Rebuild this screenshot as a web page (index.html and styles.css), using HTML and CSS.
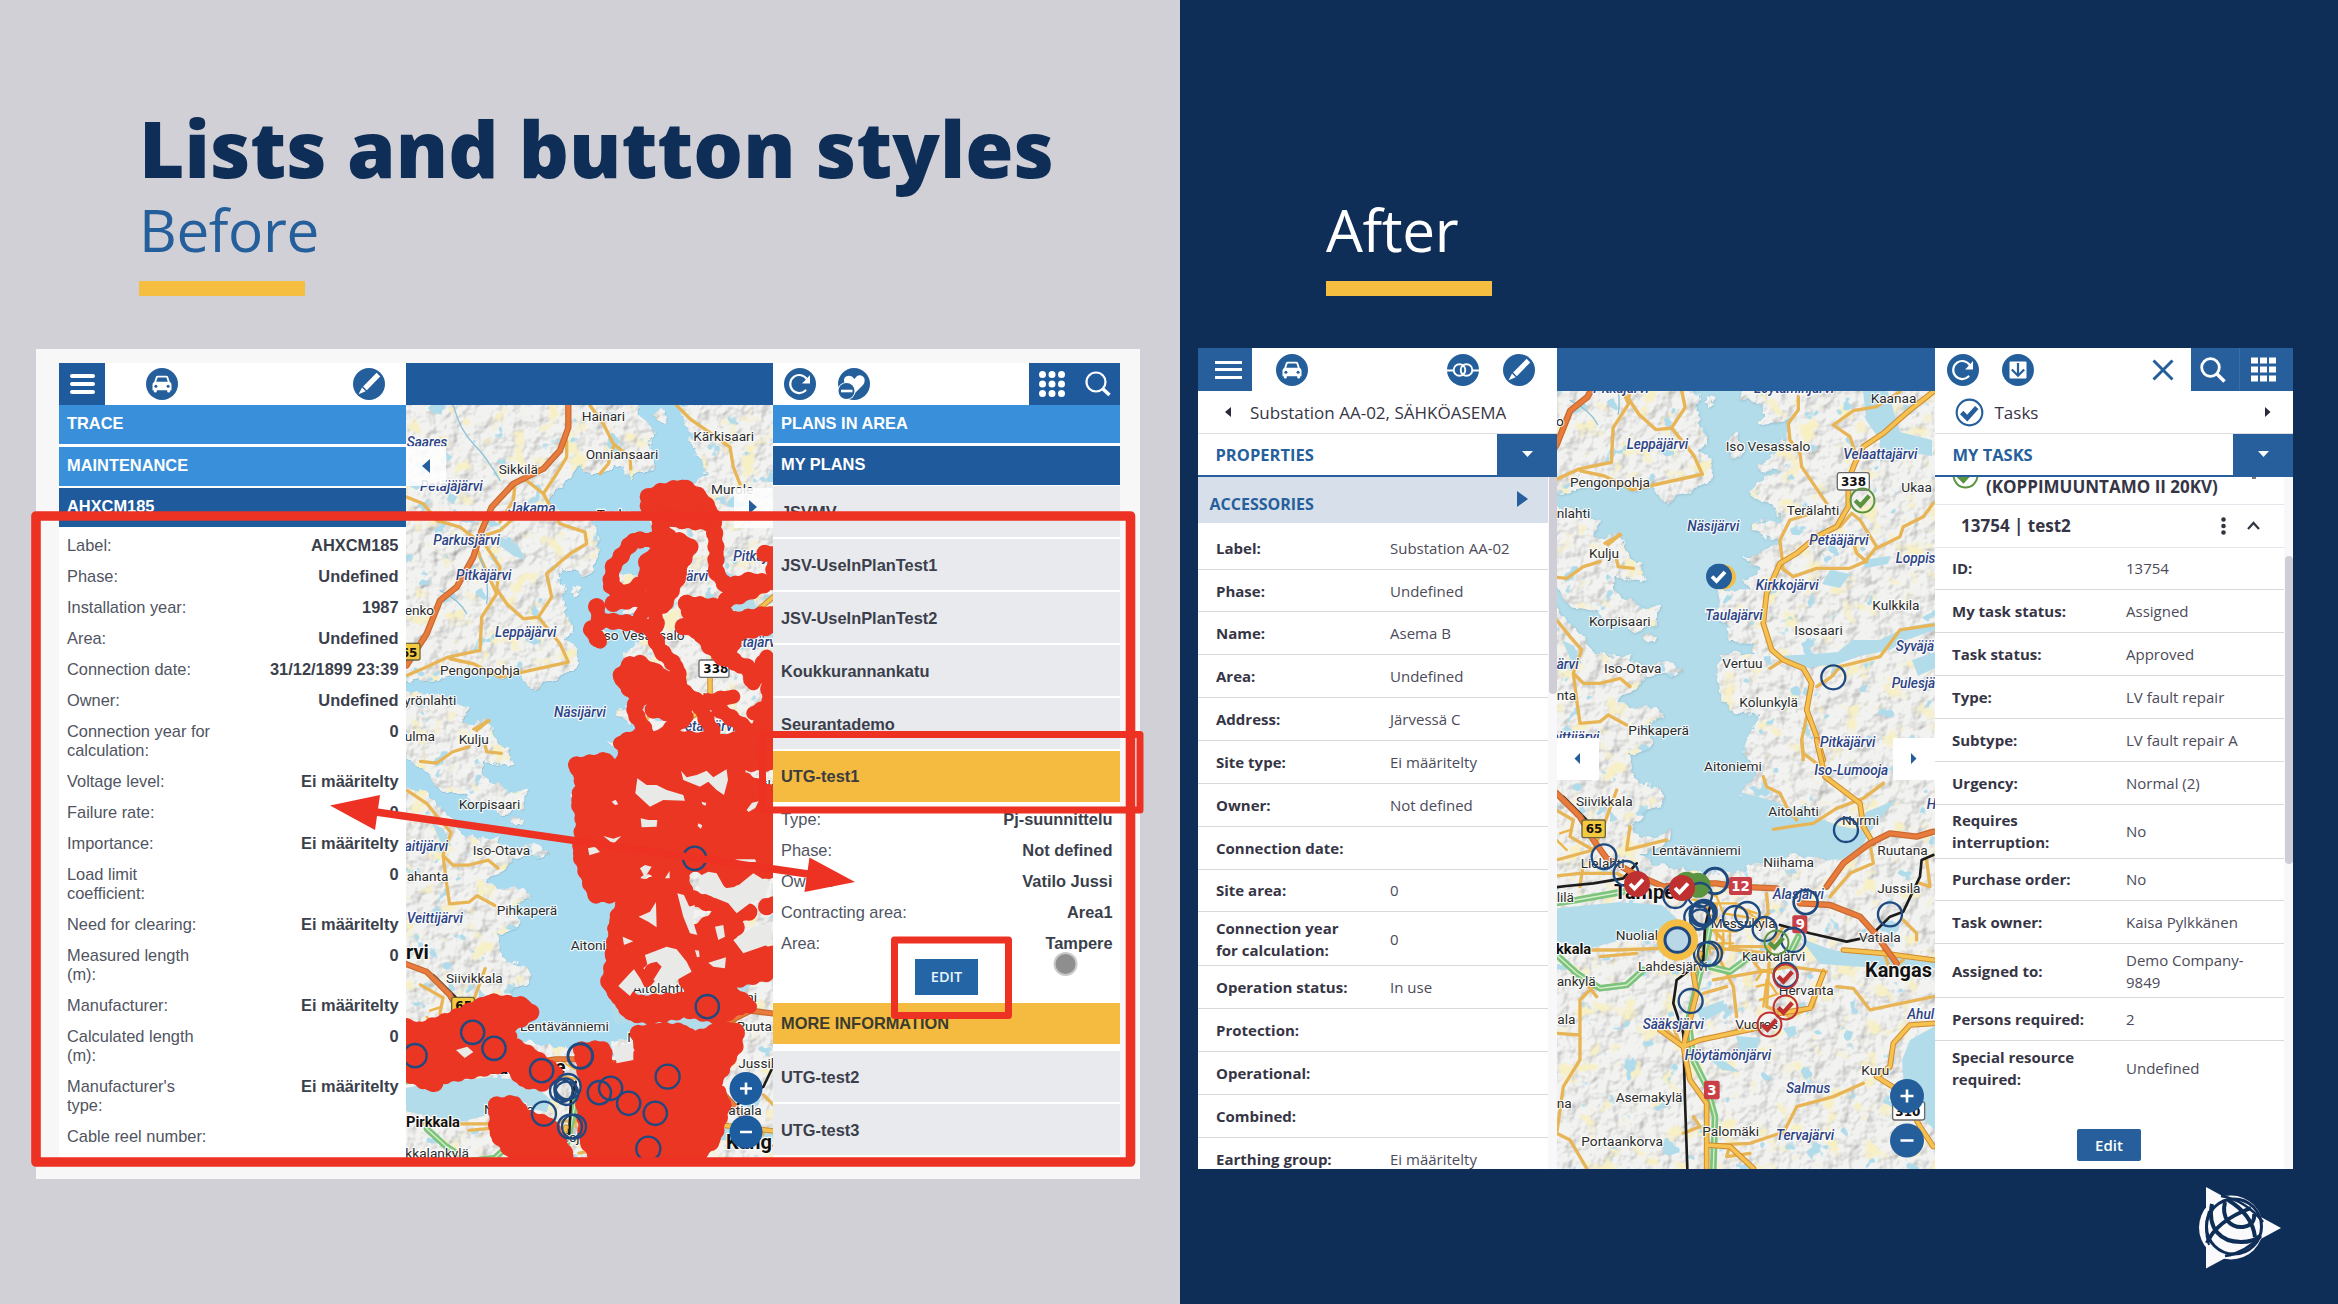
FILE: index.html
```html
<!DOCTYPE html>
<html lang="en">
<head>
<meta charset="utf-8">
<title>Lists and button styles</title>
<link rel="stylesheet" href="styles.css">
</head>
<body>
<svg class="defs" width="0" height="0" aria-hidden="true">
  <defs>
    <filter id="terrain" filterUnits="userSpaceOnUse" x="1525" y="200" width="420" height="980" color-interpolation-filters="sRGB">
      <feTurbulence type="fractalNoise" baseFrequency=".07" numOctaves="3" seed="4" result="coast"/>
      <feDisplacementMap in="SourceGraphic" in2="coast" scale="15" xChannelSelector="R" yChannelSelector="G" result="land"/>
      <feTurbulence type="fractalNoise" baseFrequency=".06" numOctaves="3" seed="9" result="n"/>
      <feDiffuseLighting in="n" surfaceScale="1.900" diffuseConstant="1.120" lighting-color="#fff" result="shade"><feDistantLight azimuth="225" elevation="62"/></feDiffuseLighting>
      <feBlend in="land" in2="shade" mode="multiply" result="hills"/>
      <feTurbulence type="fractalNoise" baseFrequency=".05" numOctaves="3" seed="21" result="n2"/>
      <feColorMatrix in="n2" values="0 0 0 0 .97  0 0 0 0 .94  0 0 0 0 .77  0 6 0 0 -3.5" result="fields"/>
      <feColorMatrix in="n2" values="0 0 0 0 .69  0 0 0 0 .86  0 0 0 0 .92  20 0 0 0 -13.8" result="ponds"/>
      <feMerge result="all"><feMergeNode in="hills"/><feMergeNode in="fields"/><feMergeNode in="ponds"/></feMerge>
      <feComposite in="all" in2="land" operator="in" result="cut"/>
      <feDropShadow in="cut" dx=".5" dy=".7" stdDeviation=".8" flood-color="#7fa9ba" flood-opacity=".6"/>
    </filter>

    <g id="land">
      <g filter="url(#terrain)" fill="#f2f2f1">
        <path d="M1525 205H1769L1785 229L1790 272L1766 284L1750 268L1735 284L1711 270L1702 287L1677 312L1704 324L1733 330L1735 363L1721 387L1694 377L1701 404L1697 420L1707 437L1702 450L1713 470L1707 483L1683 492L1670 503L1653 488L1627 490L1600 483L1577 490L1557 495L1525 497Z"/>
        <path d="M1525 505L1557 507L1580 517L1597 520L1593 537L1622 533L1628 553L1640 567L1647 580L1633 583L1617 573L1613 587L1633 603L1657 607L1657 627L1633 630L1607 617L1587 610L1570 603L1557 587L1525 565Z"/>
        <path d="M1525 605L1557 607L1570 623L1583 637L1593 650L1610 657L1633 653L1630 663L1663 660L1683 670L1677 677L1650 677L1627 690L1617 700L1630 707L1660 705L1663 717L1640 727L1650 740L1647 753L1630 750L1632 770L1640 783L1663 790L1663 807L1643 813L1633 827L1647 837L1670 830L1662 850L1640 853L1660 866L1700 871L1740 872L1765 862L1795 856L1830 858L1845 845L1850 838L1805 840L1775 832L1757 820L1748 812L1763 804L1740 796L1757 770L1745 757L1750 733L1760 715L1735 712L1722 700L1716 673L1720 655L1757 655L1752 646L1730 643L1727 624L1702 613L1722 603L1716 586L1748 592L1742 577L1762 570L1742 556L1757 556L1778 542L1752 532L1752 522L1782 520L1773 506L1750 496L1755 482L1782 472L1762 462L1782 450L1790 420L1760 425L1760 405L1740 400L1745 380L1775 385L1800 380L1790 350L1785 310L1812 320L1830 290L1845 280L1830 250L1815 210L1945 205V1180H1525Z"/>
        <path d="M1706 396l10 4-3 6-9-3zM1728 436l10-2 5 16-3 8-9-2zM1643 634l14 1-2 8-12-1zM1720 230l8 4-3 6zM1797 210l10 14-4 8-12-12zM1757 464l14-2 4 8-12 2zM1709 395h6z"/>
      </g>
      <g fill="#b2dcea">
        <path d="M1525 915L1560 908L1620 902L1662 905L1684 925L1680 938L1655 932L1630 938L1606 944L1584 950L1570 944L1525 935Z"/>
        <path d="M1776 656L1815 654L1838 652L1852 640L1880 640L1904 628L1935 622L1935 630L1906 640L1890 650L1860 656L1838 664L1800 668Z"/>
        <path d="M1740 792L1770 800L1840 826L1862 830L1866 812L1896 800L1884 814L1870 832L1860 850L1840 860L1810 856L1790 848L1750 846Z"/>
        <path d="M1862 380L1888 392L1900 432L1932 440L1932 456L1906 452L1880 462L1880 440L1866 420ZM1912 660L1935 652V668L1918 676ZM1830 570L1850 574L1840 588L1822 584ZM1862 560L1890 556L1888 564L1866 568Z"/>
        <path d="M1935 1026L1910 1040L1902 1060L1904 1085L1920 1094L1924 1120L1935 1130ZM1800 938L1832 950L1860 954L1900 958L1935 958L1935 968L1880 968L1820 964ZM1696 1010L1724 1000L1722 1012L1702 1022ZM1736 1036L1760 1038L1756 1052L1742 1060ZM1706 1056L1726 1062L1740 1072L1722 1070ZM1806 1152L1818 1142L1812 1160ZM1783 1028l12-2 2 8-8 4z"/>
        <path d="M1538 285l14 8-6 4-10-6zM1580 300l8 4-4 8-7-5zM1632 345l18 8 8 16-12-4-16-12zM1576 258l7 5-5 5zM1602 370l10 14-8-2zM1562 640l12 6 8 18-12-6zM1580 800l6 12-8 4zM1610 810l8 10-8 2z"/>
      </g>
      <g class="roads">
        <g transform="translate(1529 143) scale(.3433)">
          <path class="rd" d="M570 195L610 250L640 310L690 350L692 385M640 320L625 370L600 400M830 195L870 235L920 270L990 320L1000 380L1020 430M500 300L500 350L470 400L430 460L380 420M430 460L480 550L555 575L560 610L510 640L440 700L455 770L415 830L370 835L320 790L290 745L300 680L240 590L300 570L345 530M345 430L340 480L300 545M20 470L70 490L110 540L180 560L220 590L240 650L290 760L245 830L240 930L145 950L80 980L20 1005M150 955L220 970L300 1010L505 965L480 910L415 830M230 1170L265 1140"/>
          <path class="stream" d="M160 195Q180 270 220 310T300 420M240 650Q270 720 260 790M120 750Q180 780 200 820"/>
          <path class="mainC" d="M505 190V262L480 330L430 385L340 430L275 500L245 570L220 650L170 740L120 780L80 880L20 975"/>
          <path class="main" d="M505 190V262L480 330L430 385L340 430L275 500L245 570L220 650L170 740L120 780L80 880L20 975"/>
        </g>
        <g transform="translate(1550 340) scale(.3333)">
          <path class="rd" d="M0 710L50 715L100 680L150 665M165 610L212 585M200 660L205 680L250 685M-40 800L20 840L60 890L95 930L70 1000L100 1030L150 1030L210 1015L240 1040M70 1000L80 1080L90 1150L150 1145L175 1125L230 1155M745 170L745 210L715 250L720 300L750 340L755 380L830 490M1050 155L980 200L910 212L850 255L900 290L920 350M700 690L690 600L720 540L770 525M870 560L905 520L930 540L980 620L945 665L900 685L800 685L730 710L690 680M905 590L920 640L950 665M980 625L1050 590L1060 560L1120 530L1150 490M800 1040L845 1010L870 980L990 950L1050 870L1150 855M660 985L700 960M770 1130L755 1200L760 1260"/>
          <path class="hwC" d="M1150 155L1080 210L1000 280L940 320L915 370L895 420L895 500L860 560L800 590L740 640L690 670L650 760L640 850L665 930L700 960L760 985L785 1030L770 1110L800 1190L820 1260"/>
          <path class="hw" d="M1150 155L1080 210L1000 280L940 320L915 370L895 420L895 500L860 560L800 590L740 640L690 670L650 760L640 850L665 930L700 960L760 985L785 1030L770 1110L800 1190L820 1260"/>
        </g>
        <g transform="translate(1550 740) scale(.3333)">
          <path class="rd" d="M755 0L760 40L800 70M640 110L650 140L690 160L710 200L740 240M670 268L720 260L790 250L860 205L940 175L1000 130M960 310L970 370L900 400L840 470M0 200L70 240L60 290L130 330L20 360M130 330L160 260L200 150M240 260L230 330L350 300M0 410L90 400L200 400L240 420M100 370L90 440M0 630L200 630L330 625M150 650L260 640M400 640L440 620L560 630L660 640M650 460L655 520L620 560M480 560L520 600L510 660L550 740L560 830M540 620L660 620L700 560M820 690L790 800L720 830L650 800L660 620M860 740L910 745L960 810L1150 770M20 880L90 885L90 960L40 1040L20 1180L60 1200L110 1285M90 880L90 780L130 740M100 720L140 770M330 850L390 910L370 860M560 870L640 850M700 1180L740 1100L850 1070L940 1030M500 1215L600 1210L690 1180M540 1215L530 1250L600 1240M490 720L600 700L720 680L830 695M1060 540L1100 580L1100 600M1130 360L1140 440L1110 430M1000 630L1020 690L1060 660M600 650L630 690M460 760L530 740M400 1180L450 1160L430 1130"/>
          <path class="town" d="M400 470L470 490L560 490L650 560M440 440L500 470L520 520L640 540M470 520L560 560M500 490V600M520 580V640M540 560V620M480 570L560 575M470 610H550M470 490L480 640M560 500L620 520M620 720L640 690L670 700M620 740L660 730L680 760M630 780L690 760M640 800L650 720M30 280L60 270M20 300L50 330"/>
          <path class="greenC" d="M-60 500L80 480L220 455M20 645L80 700L150 745L230 735L280 690M480 560L460 660L440 740L415 840L430 960L470 1040L495 1130L490 1285M480 680L540 695L600 650M720 640L745 590"/>
          <path class="green" d="M-60 500L80 480L220 455M20 645L80 700L150 745L230 735L280 690M480 560L460 660L440 740L415 840L430 960L470 1040L495 1130L490 1285M480 680L540 695L600 650M720 640L745 590"/>
          <path class="rail" d="M-60 450L50 438L130 430L220 415L260 370M480 500L465 560L460 660L380 720L370 790L400 880L405 1080L412 1285M690 555L780 580L890 605L960 590L1020 530L1060 515L1110 410L1115 360L1150 345M40 170L130 260"/>
          <path class="hwC" d="M800 0L825 110L930 190L940 260L970 310M400 920L440 760L430 700L450 640M330 870L400 920L450 900L640 860M400 920L420 1020L470 1090L470 1285M470 1215L540 1220L610 1285M1150 850L1080 855L1030 910L1020 980L980 1010L1060 1060L1110 1160L1150 1220M880 630L1000 640L1150 660M820 700L780 805L690 820"/>
          <path class="hw" d="M800 0L825 110L930 190L940 260L970 310M400 920L440 760L430 700L450 640M330 870L400 920L450 900L640 860M400 920L420 1020L470 1090L470 1285M470 1215L540 1220L610 1285M1150 850L1080 855L1030 910L1020 980L980 1010L1060 1060L1110 1160L1150 1220M880 630L1000 640L1150 660M820 700L780 805L690 820"/>
          <path class="mainC" d="M-60 130L20 160L90 230L130 300L170 355L250 400L340 440L420 430L500 430L560 440L680 445M830 440L880 370L960 310L1020 280L1100 290L1150 275M750 490L840 495L930 530L975 580L1040 670"/>
          <path class="main" d="M-60 130L20 160L90 230L130 300L170 355L250 400L340 440L420 430L500 430L560 440L680 445M830 440L880 370L960 310L1020 280L1100 290L1150 275M750 490L840 495L930 530L975 580L1040 670"/>
        </g>
      </g>
    </g>

    <g id="net-top">
      <path class="solid" d="M745 470L780 455L850 440L900 470L930 510L945 550L820 540L745 510Z"/>
      <path class="line" d="M940 540L950 640L945 690L980 740L1050 720L1120 730M980 780L1040 760L1120 720M1095 640H1125L1120 720M780 540V600H700L640 680L630 740L680 760L740 720V660L840 600L870 620L840 680L740 700L800 740M780 560L830 620M640 790L760 770L720 830M590 800L600 850L570 870L600 905M600 840L700 850L750 860L780 930L830 980L840 1030M760 770L770 860M860 790L940 830L1000 850L1120 820M850 860L920 880L960 950L1040 980L1060 1030L1100 950L1110 1100L1060 1120M940 860L980 940L1020 980M690 975L660 1010L720 1060L700 1110L740 1180L660 1210M720 970L800 1020L900 1090L1000 1070M700 1020L800 1060M760 1110L860 1130L790 1185M900 1100L940 1180M960 1110L1060 1180L1110 1120L1120 1240M800 740L740 790"/>
      <path class="solid" d="M860 790L950 800L1000 840L1110 820V860L1010 880L980 960L930 920L880 850ZM690 975L760 990L860 1060L850 1110L760 1060L720 1080L665 1020ZM690 1240L860 1230L1000 1200L1110 1190V1270H690ZM760 680L830 640L840 700L790 800L760 800Z"/>
    </g>
    <g id="net-bottom">
      <path class="solid" fill-rule="evenodd" d="M530 75L620 60L660 110L680 20L780 -10L1020 10L1010 110L1110 160V390L990 420L940 390L880 370L820 410L720 370L690 430L640 465L585 465L560 400L540 340L545 290L550 240L535 180L550 130Z"/>
      <path class="line" d="M700 460L650 540L645 640L625 730L680 800L820 800L950 770L1050 800M720 500L830 560L900 620L950 560L960 500L860 470L840 400M780 600L900 650L900 720L1050 700L1120 640M640 640L740 720L770 680M970 540L1050 515M1100 500L1120 490M720 440L800 430"/>
      <path class="solid" d="M680 470L740 440L810 440L840 520L870 590L1000 500L1010 560L960 620L1100 640V700L960 730L900 800L850 700L800 630L740 640L690 690L650 740L640 650L650 540ZM650 760L720 790L850 780L960 740L1040 790L1000 810L960 830L860 810L750 830L690 820Z"/>
      <path class="solid" d="M715 880L780 870L850 875L880 900L960 870L1010 870L1005 920L940 1030L970 1090L940 1200L900 1235L850 1250H590L560 1200L550 1080L610 1000L700 975L730 940ZM20 860L60 870L150 840L270 785L370 795L395 820L320 860L330 910L400 950L470 1000L430 1030L370 1020L330 970L250 985L120 1010L100 1035L20 1000ZM290 1095L345 1090L370 1130L450 1155L500 1250H350L290 1180ZM545 930L610 925L620 990L560 1030Z"/>
    </g>

    <symbol id="i-car" viewBox="0 0 32 32"><circle cx="16" cy="16" r="16" fill="#245f9c"/><path d="M10 8.500Q10.300 7.800 12 7.800H20Q21.700 7.800 22 8.500L23.800 14Q25.500 14.800 25.500 16.500V22.200H24.200V23.600Q24.200 24.600 22.700 24.600T21.200 23.600V22.200H10.800V23.600Q10.800 24.600 9.300 24.600T7.800 23.600V22.200H6.500V16.500Q6.500 14.800 8.200 14Z" fill="#fff"/><path d="M11.600 9.400H20.400L21.800 13.700H10.200Z" fill="#245f9c"/><circle cx="9.900" cy="18.200" r="1.500" fill="#245f9c"/><circle cx="22.100" cy="18.200" r="1.500" fill="#245f9c"/></symbol>
    <symbol id="i-pen" viewBox="0 0 32 32"><circle cx="16" cy="16" r="16" fill="#245f9c"/><path d="M23.600 4.800L27.200 8.400L13.800 22.200L10.100 18.500ZM9 19.600L12.700 23.200L5.600 26.300Z" fill="#fff"/></symbol>
    <symbol id="i-redo" viewBox="0 0 32 32"><circle cx="16" cy="16" r="16" fill="#245f9c"/><path d="M21.500 22.500A9 9 0 1 1 23 11.500" fill="none" stroke="#fff" stroke-width="2.200" stroke-linecap="round"/><path d="M26 7v8.500h-8l3-3z" fill="#fff"/></symbol>
    <symbol id="i-heart" viewBox="0 0 32 32"><circle cx="16" cy="16" r="16" fill="#245f9c"/><path d="M17 25L7.500 16Q4 11 8 8.500Q13 6 16.500 11Q20 5 25 8.500Q28.500 12 25 17Z" fill="#fff"/><circle cx="8.500" cy="23" r="9" fill="#fff"/><circle cx="8.500" cy="23" r="8" fill="#245f9c"/><path d="M3 23h11.500" stroke="#fff" stroke-width="2.600"/></symbol>
    <symbol id="i-rings" viewBox="0 0 32 32"><circle cx="16" cy="16" r="16" fill="#245f9c"/><g fill="none" stroke="#fff" stroke-width="1.900"><circle cx="12.500" cy="16" r="5.800"/><circle cx="19.500" cy="16" r="5.800"/><path d="M0 16.500h6.700M25.300 16.500h6.700"/></g></symbol>
    <symbol id="i-down" viewBox="0 0 32 32"><circle cx="16" cy="16" r="16" fill="#245f9c"/><rect x="7.500" y="7.500" width="17" height="17" rx="1" fill="#fff"/><path d="M16 9v12.500M9.800 15.500L16 21.700L22.200 15.500" fill="none" stroke="#245f9c" stroke-width="2.200"/></symbol>
    <symbol id="i-search" viewBox="0 0 26 26"><circle cx="10.500" cy="10.500" r="8.800" fill="none" stroke="#fff" stroke-width="2.800"/><path d="M17 17l7.500 7.500" stroke="#fff" stroke-width="3.600"/></symbol>
    <symbol id="i-ok" viewBox="-13 -13 26 26"><circle r="11.500" fill="none" stroke="currentColor" stroke-width="1.900"/><path d="M-7 0l5 5 8.500-9.500" fill="none" stroke="currentColor" stroke-width="4.200"/></symbol>
    <symbol id="i-okfull" viewBox="-13 -13 26 26"><circle r="13" fill="currentColor"/><path d="M-7 0l4.500 4.500 8.500-9" fill="none" stroke="#fff" stroke-width="3.800"/></symbol>
  </defs>
</svg>

<main class="slide">
  <section class="half before">
    <header class="head">
      <h1>Lists and button styles</h1>
      <h2>Before</h2>
      <div class="rule"></div>
    </header>

    <div class="card">
      <div class="app">
        <div class="panel">
          <div class="bar">
            <div class="burger"><i></i><i></i><i></i></div>
            <svg class="ico car"><use href="#i-car"/></svg>
            <svg class="ico pen"><use href="#i-pen"/></svg>
          </div>
          <div class="sect light">TRACE</div>
          <div class="sect light">MAINTENANCE</div>
          <div class="sect">AHXCM185</div>
          <dl class="facts">
            <div><dt>Label:</dt><dd>AHXCM185</dd></div>
            <div><dt>Phase:</dt><dd>Undefined</dd></div>
            <div><dt>Installation year:</dt><dd>1987</dd></div>
            <div><dt>Area:</dt><dd>Undefined</dd></div>
            <div><dt>Connection date:</dt><dd>31/12/1899 23:39</dd></div>
            <div><dt>Owner:</dt><dd>Undefined</dd></div>
            <div><dt>Connection year for<br>calculation:</dt><dd>0</dd></div>
            <div><dt>Voltage level:</dt><dd>Ei määritelty</dd></div>
            <div><dt>Failure rate:</dt><dd>0</dd></div>
            <div><dt>Importance:</dt><dd>Ei määritelty</dd></div>
            <div><dt>Load limit<br>coefficient:</dt><dd>0</dd></div>
            <div><dt>Need for clearing:</dt><dd>Ei määritelty</dd></div>
            <div><dt>Measured length<br>(m):</dt><dd>0</dd></div>
            <div><dt>Manufacturer:</dt><dd>Ei määritelty</dd></div>
            <div><dt>Calculated length<br>(m):</dt><dd>0</dd></div>
            <div><dt>Manufacturer's<br>type:</dt><dd>Ei määritelty</dd></div>
            <div><dt>Cable reel number:</dt><dd></dd></div>
          </dl>
        </div>

        <div class="mapcol">
          <div class="mapbar"></div>
          <svg class="map" viewBox="406 405 367 755" preserveAspectRatio="none">
            <rect x="406" y="405" width="367" height="755" fill="#a9dbf0"/>
            <use href="#land" transform="translate(-1084.500 201.600) scale(.9709)"/>
            <g transform="translate(400 340) scale(.3333)" class="lbl">
              <text x="545" y="242">Hainari</text><text x="880" y="304">Kärkisaari</text><text x="557" y="357">Onniansaari</text><text x="296" y="403">Sikkilä</text><text x="933" y="462">Murole</text><text class="w" x="20" y="320">Saares</text><text class="w" x="60" y="453">Petäjäjärvi</text><text class="w" x="325" y="519">Jakama</text><text x="590" y="538">Teeks</text><text class="w" x="100" y="614">Parkusjärvi</text><text class="w" x="168" y="721">Pitkäjärvi</text><text x="14" y="826">enko</text><text class="w" x="285" y="892">Leppäjärvi</text><text x="120" y="1004">Pengonpohja</text><text x="12" y="1094">yrönlahti</text><text class="w" x="462" y="1131">Näsijärvi</text><text x="14" y="1203">ulma</text><text x="176" y="1211">Kulju</text><text class="w" x="1000" y="664">Pitkäj</text><text class="w" x="740" y="724">Leppäjärvi</text><text x="600" y="900">Iso Vesassalo</text><text class="w" x="915" y="922">Velaattajärvi</text><text x="760" y="1085">Terälahti</text><text class="w" x="830" y="1172">Petääjärvi</text>
              <rect class="shieldY" x="-20" y="910" width="80" height="50" rx="6"/><text class="num" x="2" y="950">65</text>
              <rect class="shieldW" x="897" y="960" width="90" height="52" rx="6"/><text class="num" x="910" y="1000">338</text>
            </g>
            <g transform="translate(400 740) scale(.3333)" class="lbl">
              <text x="176" y="207">Korpisaari</text><text x="218" y="345">Iso-Otava</text><text class="w" x="14" y="332">aitijärvi</text><text x="20" y="422">ahanta</text><text x="290" y="525">Pihkaperä</text><text class="w" x="20" y="549">Veittijärvi</text><text x="512" y="630">Aitoniemi</text><text class="b" x="18" y="656">rvi</text><text x="138" y="730">Siivikkala</text>
              <text x="640" y="442">Kolunkylä</text><text x="698" y="760">Aitolahti</text><text x="360" y="872">Lentävänniemi</text><text x="682" y="905">Niihama</text><text x="1010" y="872">Ruutana</text><text x="1015" y="985">Jussila</text><text x="1040" y="150">Ikkilä</text><text class="w" x="1000" y="640">oja</text><text x="960" y="785">Nurmi</text><text x="985" y="1124">atiala</text><text class="b" x="260" y="1002">Tampere</text><text x="252" y="1122">Nuoliala</text><text class="b s" x="18" y="1160">Pirkkala</text><text x="16" y="1255">kkalankylä</text><text class="b" x="978" y="1228">Kangas</text><text x="396" y="1205">Lahdesjärvi</text>
              <rect class="shieldY" x="155" y="772" width="68" height="48" rx="6"/><text class="num" x="166" y="810">65</text>
            </g>
            <g transform="translate(400 340) scale(.3333)"><use href="#net-top" class="core"/><use href="#net-top" class="dots"/></g>
            <g transform="translate(400 740) scale(.3333)">
              <use href="#net-bottom" class="core"/><use href="#net-bottom" class="dots"/>
              <path class="gap" d="M712 115L740 135L770 135L800 150L850 165L855 182L790 180L750 200L706 160ZM843 92L860 112L890 105L920 92L940 112L980 88L984 120L972 165L950 150L925 125L900 140L850 120ZM722 235L745 240L772 240L770 260L725 262ZM610 288L640 296L664 288L640 312ZM564 325L585 320L600 336L568 346ZM635 185l12-6 8 14-10 2zM895 250l12 6-4 10-10-8zM905 185l14 4-2 8-10-4zM1040 210l16-22 20-4-10 20-20 12zM720 385L735 375L755 380L735 412ZM1005 358l60 0 4 8-40 0z"/>
              <path class="gap" d="M735 645L800 620L830 628L860 665L875 695L840 715L800 740L760 720L785 680L770 665L742 672ZM655 738L690 700L702 688L722 718L735 745L705 745L690 768ZM716 530L750 515L768 486L770 562L745 545ZM832 460L852 465L868 500L885 495L878 540L892 585L870 580L850 530ZM895 410L925 395L950 400L975 445L1010 440L1060 400L1110 430L1095 470L1050 490L1010 520L985 490L900 455ZM1000 600L1060 560L1115 550V610L1030 640ZM925 668L978 652L975 685L940 680ZM945 560L970 555L975 590L955 600ZM885 630l12 2 2 18-8 2zM668 590L700 604L672 615ZM795 415l14-22v22zM168 930l34-10 18 16-26 18zM640 920L700 910V960L650 970Z"/>
              <g class="rings">
                <circle cx="884" cy="355" r="35"/><circle cx="922" cy="800" r="35"/><circle cx="45" cy="947" r="35"/><circle cx="218" cy="877" r="35"/><circle cx="282" cy="925" r="35"/><circle cx="541" cy="948" r="37" stroke-width="9"/><circle cx="425" cy="992" r="35"/><circle cx="484" cy="1052" r="34"/><circle cx="496" cy="1048" r="33"/><circle cx="504" cy="1040" r="38"/><circle cx="500" cy="1060" r="35"/><circle cx="432" cy="1121" r="36"/><circle cx="510" cy="1160" r="36"/><circle cx="522" cy="1160" r="36"/><circle cx="598" cy="1058" r="35"/><circle cx="632" cy="1045" r="35"/><circle cx="686" cy="1090" r="35"/><circle cx="803" cy="1010" r="36"/><circle cx="766" cy="1120" r="35"/><circle cx="745" cy="1226" r="36"/>
              </g>
            </g>
            <g fill="#fff"><rect x="406" y="446" width="40" height="40" opacity=".85"/><rect x="734" y="488" width="39" height="40" opacity=".85"/></g>
            <path d="M430 459v14l-8-7zM749 500v14l8-7z" fill="#245f9c"/>
            <circle cx="746" cy="1088.500" r="16.500" fill="#1d5c9e"/><circle cx="746" cy="1132" r="16.500" fill="#1d5c9e"/>
            <path d="M740 1088.500h12M746 1082.500v12M740 1132h12" stroke="#fff" stroke-width="2.600"/>
          </svg>
        </div>

        <div class="panel">
          <div class="bar">
            <svg class="ico redo"><use href="#i-redo"/></svg>
            <svg class="ico heart"><use href="#i-heart"/></svg>
            <div class="tools">
              <svg width="26" height="26" viewBox="0 0 26 26"><path d="M3.500 3.500h0M13 3.500h0M22.500 3.500h0M3.500 13h0M13 13h0M22.500 13h0M3.500 22.500h0M13 22.500h0M22.500 22.500h0" stroke="#fff" stroke-width="7" stroke-linecap="round"/></svg>
              <svg width="26" height="26" viewBox="0 0 26 26"><circle cx="11" cy="11" r="9.500" fill="none" stroke="#fff" stroke-width="2.200"/><path d="M18 18l6.500 6" stroke="#fff" stroke-width="3.600"/></svg>
            </div>
          </div>
          <div class="sect light up">PLANS IN AREA</div>
          <div class="sect">MY PLANS</div>
          <ul class="plans">
            <li>JSVMV</li>
            <li>JSV-UseInPlanTest1</li>
            <li>JSV-UseInPlanTest2</li>
            <li>Koukkurannankatu</li>
            <li>Seurantademo</li>
            <li class="sel">UTG-test1</li>
          </ul>
          <dl class="facts second">
            <div><dt>Type:</dt><dd>Pj-suunnittelu</dd></div>
            <div><dt>Phase:</dt><dd>Not defined</dd></div>
            <div><dt>Owner:</dt><dd>Vatilo Jussi</dd></div>
            <div><dt>Contracting area:</dt><dd>Area1</dd></div>
            <div><dt>Area:</dt><dd>Tampere</dd></div>
          </dl>
          <button class="edit-old" type="button">EDIT</button>
          <div class="more">MORE INFORMATION</div>
          <ul class="plans tail">
            <li>UTG-test2</li>
            <li>UTG-test3</li>
          </ul>
        </div>
      </div>
    </div>

    <svg class="notes" width="1180" height="1304" viewBox="0 0 1180 1304">
      <circle cx="1065.500" cy="964" r="12" fill="#c9c9c9"/><circle cx="1065.500" cy="964" r="10" fill="#8e8e8e"/>
      <g fill="none" stroke="#ed3224" stroke-linejoin="round">
        <rect x="36" y="516" width="1094.500" height="646" stroke-width="9.600"/>
        <rect x="762.500" y="734.500" width="377.500" height="75.500" stroke-width="7"/>
        <rect x="894.500" y="940" width="114" height="75.500" stroke-width="7"/>
        <path d="M376 812L808 874" stroke-width="7.500"/>
      </g>
      <path d="M330 805.500L380 795L375 830ZM855 882L809.500 857.500L804.500 892Z" fill="#ed3224"/>
    </svg>
  </section>

  <section class="half after">
    <header class="head">
      <h2>After</h2>
      <div class="rule"></div>
    </header>

    <div class="appnew">
      <div class="side left">
        <div class="nbar">
          <div class="burger"><i></i><i></i><i></i></div>
          <svg class="ico car"><use href="#i-car"/></svg>
          <svg class="ico rings-i"><use href="#i-rings"/></svg>
          <svg class="ico"><use href="#i-pen"/></svg>
        </div>
        <div class="crumb"><svg class="tri" width="6" height="10"><path d="M6 0v10L0 5z"/></svg><span>Substation AA-02, SÄHKÖASEMA</span></div>
        <div class="tab"><span>PROPERTIES</span><b class="drop"><svg width="11" height="6"><path d="M0 0h11L5.500 6z"/></svg></b></div>
        <div class="scroll">
          <div class="rows">
            <div class="acc"><span>ACCESSORIES</span><svg width="12" height="16"><path d="M0 0v16l11-8z"/></svg></div>
            <div class="row first"><b>Label:</b><span>Substation AA-02</span></div>
            <div class="row"><b>Phase:</b><span>Undefined</span></div>
            <div class="row"><b>Name:</b><span>Asema B</span></div>
            <div class="row"><b>Area:</b><span>Undefined</span></div>
            <div class="row"><b>Address:</b><span>Järvessä C</span></div>
            <div class="row"><b>Site type:</b><span>Ei määritelty</span></div>
            <div class="row"><b>Owner:</b><span>Not defined</span></div>
            <div class="row"><b>Connection date:</b><span></span></div>
            <div class="row"><b>Site area:</b><span>0</span></div>
            <div class="row two"><b>Connection year<br>for calculation:</b><span>0</span></div>
            <div class="row"><b>Operation status:</b><span>In use</span></div>
            <div class="row"><b>Protection:</b><span></span></div>
            <div class="row"><b>Operational:</b><span></span></div>
            <div class="row"><b>Combined:</b><span></span></div>
            <div class="row"><b>Earthing group:</b><span>Ei määritelty</span></div>
          </div>
          <div class="track"><div class="thumb"></div></div>
        </div>
      </div>

      <div class="mid">
        <div class="mapbar"></div>
        <svg class="map" viewBox="1557 391 378 778">
          <rect x="1557" y="391" width="378" height="778" fill="#b2dcea"/>
          <use href="#land"/>
          <g transform="translate(1550 340) scale(.3333)" class="lbl">
            <text class="w" x="130" y="158">Pitkäjärvi</text><text class="w" x="612" y="158">Löytäminjärvi</text><text x="962" y="188">Kaanaa</text><text x="18" y="258">o</text><text class="w" x="230" y="326">Leppäjärvi</text><text x="527" y="333">Iso Vesassalo</text><text class="w" x="880" y="358">Velaattajärvi</text><text x="60" y="441">Pengonpohja</text><text x="1054" y="457">Ukaa</text><text x="20" y="534">nlahti</text><text x="710" y="525">Terälahti</text><text class="w" x="412" y="572">Näsijärvi</text><text class="w" x="778" y="615">Petääjärvi</text><text x="117" y="655">Kulju</text><text class="w" x="1037" y="670">Loppis</text><text class="w" x="617" y="749">Kirkkojärvi</text><text x="967" y="810">Kulkkila</text><text class="w" x="466" y="840">Taulajärvi</text><text x="117" y="858">Korpisaari</text><text x="733" y="884">Isosaari</text><text class="w" x="1037" y="932">Syväjä</text><text class="w" x="20" y="986">ärvi</text><text x="162" y="999">Iso-Otava</text><text x="517" y="984">Vertuu</text><text class="w" x="1025" y="1044">Pulesjä</text><text x="20" y="1080">nta</text><text x="568" y="1102">Kolunkylä</text><text x="235" y="1186">Pihkaperä</text><text class="w" x="810" y="1221">Pitkäjärvi</text><text class="w" x="-20" y="1205">Veittijärvi</text>
            <rect class="shieldW" x="862" y="398" width="96" height="52" rx="7"/><text class="num" x="873" y="438">338</text>
          </g>
          <g transform="translate(1550 740) scale(.3333)" class="lbl">
            <text x="462" y="94">Aitoniemi</text><text class="w" x="793" y="105">Iso-Lumooja</text><text x="78" y="197">Siivikkala</text><text x="655" y="229">Aitolahti</text><text class="w" x="1130" y="206">H</text><text x="876" y="255">Nurmi</text><text x="92" y="383">Lielahti</text><text x="306" y="345">Lentävänniemi</text><text x="640" y="380">Niihama</text><text x="982" y="345">Ruutana</text><text x="20" y="486">lilä</text><text class="b" x="192" y="478">Tampere</text><text class="w" x="668" y="476">Alasjärvi</text><text x="982" y="460">Jussila</text><text x="482" y="563">Messukylä</text><text x="197" y="601">Nuoliala</text><text x="927" y="605">Vatiala</text><text class="b s" x="18" y="641">kkala</text><text x="576" y="662">Kaukajärvi</text><text x="264" y="694">Lahdesjärvi</text><text class="b" x="945" y="710">Kangas</text><text x="20" y="738">ankylä</text><text x="686" y="765">Hervanta</text><text x="22" y="851">ala</text><text class="w" x="278" y="868">Sääksjärvi</text><text x="556" y="868">Vuores</text><text class="w" x="1072" y="838">Ahul</text><text class="w" x="404" y="960">Höytämönjärvi</text><text x="934" y="1005">Kuru</text><text x="197" y="1086">Asemakylä</text><text class="w" x="708" y="1060">Salmus</text><text x="20" y="1104">na</text><text x="457" y="1188">Palomäki</text><text class="w" x="678" y="1201">Tervajärvi</text><text x="94" y="1217">Portaankorva</text>
            <rect class="shieldY" x="96" y="240" width="70" height="53" rx="6"/><text class="num" x="107" y="280">65</text>
            <rect class="shieldR" x="537" y="411" width="69" height="54" rx="6"/><text class="num wt" x="544" y="452">12</text>
            <rect class="shieldR" x="727" y="526" width="45" height="54" rx="6"/><text class="num wt" x="737" y="567">9</text>
            <rect class="shieldR" x="462" y="1022" width="47" height="56" rx="6"/><text class="num wt" x="472" y="1064">3</text>
            <rect class="shieldW" x="1028" y="1085" width="96" height="55" rx="7"/><text class="num" x="1036" y="1128">310</text>
            <g class="rings">
              <circle cx="888" cy="270" r="36"/><circle cx="162" cy="350" r="37"/><circle cx="228" cy="400" r="37"/><circle cx="376" cy="468" r="36"/><circle cx="495" cy="423" r="38" stroke-width="9"/><circle cx="410" cy="434" r="35" class="done"/><circle cx="444" cy="436" r="34" class="done"/><circle cx="450" cy="465" r="36"/><circle cx="440" cy="532" r="37"/><circle cx="462" cy="518" r="37" stroke-width="9"/><circle cx="456" cy="522" r="36" stroke-width="9"/><circle cx="450" cy="538" r="30"/><circle cx="556" cy="535" r="37"/><circle cx="592" cy="523" r="37"/><circle cx="767" cy="486" r="36" stroke-width="8"/><circle cx="644" cy="567" r="36"/><circle cx="730" cy="600" r="36"/><circle cx="1020" cy="523" r="36"/><circle cx="480" cy="641" r="36"/><circle cx="468" cy="643" r="36"/><circle cx="422" cy="783" r="36"/><circle cx="707" cy="705" r="36"/>
              <circle cx="382" cy="600" r="51" class="halo"/><circle cx="382" cy="600" r="37" class="picked" stroke-width="9"/>
            </g>
          </g>
          <circle cx="850" cy="1012" r="36" transform="translate(1550 340) scale(.3333)" class="ring1"/>
          <circle cx="1723.500" cy="577" r="12.500" fill="#f5bd43"/>
          <g color="#245f9c"><use href="#i-okfull" x="1706" y="563.500" width="26" height="26"/></g>
          <g color="#5b9440"><use href="#i-ok" x="1849" y="487" width="27" height="27"/><use href="#i-ok" x="1763" y="929" width="27" height="27"/></g>
          <g color="#bf3030"><use href="#i-okfull" x="1624" y="871" width="26" height="26"/><use href="#i-okfull" x="1669" y="875" width="26" height="26"/><use href="#i-ok" x="1772" y="963" width="27" height="27"/><use href="#i-ok" x="1772" y="994" width="27" height="27"/><use href="#i-ok" x="1756" y="1011" width="27" height="27"/></g>
          <path d="M1557 738h42v42h-42zM1893 738h42v42h-42z" fill="#fff"/>
          <path d="M1580 753v11l-5.500-5.500zM1911 753v11l5.500-5.500z" fill="#245f9c"/>
          <circle cx="1907" cy="1096" r="17" fill="#245f9c"/><circle cx="1907" cy="1140.500" r="17" fill="#245f9c"/>
          <path d="M1900.500 1096h13M1907 1089.500v13M1900.500 1140.500h13" stroke="#fff" stroke-width="2.600"/>
        </svg>
      </div>

      <div class="side right">
        <div class="nbar">
          <svg class="ico redo"><use href="#i-redo"/></svg>
          <svg class="ico downl"><use href="#i-down"/></svg>
          <svg class="close" width="22" height="22" viewBox="0 0 22 22"><path d="M1.500 1.500l19 19M20.500 1.500l-19 19" stroke="#245f9c" stroke-width="3"/></svg>
          <div class="find"><svg width="26" height="26"><use href="#i-search"/></svg></div>
          <div class="grid9"><svg width="25" height="25" viewBox="0 0 25 25"><path d="M0 .500h7v6H0zM9 .500h7v6H9zM18 .500h7v6h-7zM0 9.500h7v6H0zM9 9.500h7v6H9zM18 9.500h7v6h-7zM0 18.500h7v6H0zM9 18.500h7v6H9zM18 18.500h7v6h-7z" fill="#fff"/></svg></div>
        </div>
        <div class="crumb"><svg class="ok" width="29" height="29" color="#245f9c"><use href="#i-ok"/></svg><span>Tasks</span><svg class="tri" width="6" height="10"><path d="M0 0v10l5.500-5z"/></svg></div>
        <div class="tab"><span>MY TASKS</span><b class="drop"><svg width="11" height="6"><path d="M0 0h11L5.500 6z"/></svg></b></div>
        <div class="scroll">
          <div class="rows">
            <div class="cut"><svg class="okcut" width="27" height="27" color="#5b9440"><use href="#i-ok"/></svg><span>(KOPPIMUUNTAMO II 20KV)</span><i></i></div>
            <div class="task"><span>13754 | test2</span><svg width="5" height="18"><path d="M2.500 2.500h0M2.500 9h0M2.500 15.500h0" stroke="#303542" stroke-width="4.600" stroke-linecap="round"/></svg><svg width="13" height="9"><path d="M1 8l5.500-6L12 8" fill="none" stroke="#303542" stroke-width="2.200"/></svg></div>
            <div class="row"><b>ID:</b><span>13754</span></div>
            <div class="row"><b>My task status:</b><span>Assigned</span></div>
            <div class="row"><b>Task status:</b><span>Approved</span></div>
            <div class="row"><b>Type:</b><span>LV fault repair</span></div>
            <div class="row"><b>Subtype:</b><span>LV fault repair A</span></div>
            <div class="row"><b>Urgency:</b><span>Normal (2)</span></div>
            <div class="row two"><b>Requires<br>interruption:</b><span>No</span></div>
            <div class="row"><b>Purchase order:</b><span>No</span></div>
            <div class="row"><b>Task owner:</b><span>Kaisa Pylkkänen</span></div>
            <div class="row two"><b>Assigned to:</b><span>Demo Company-<br>9849</span></div>
            <div class="row"><b>Persons required:</b><span>2</span></div>
            <div class="row two last"><b>Special resource<br>required:</b><span>Undefined</span></div>
            <button class="edit-new" type="button">Edit</button>
          </div>
          <div class="track"><div class="thumb"></div></div>
        </div>
      </div>
    </div>

    <svg class="logo" width="82" height="82" viewBox="0 0 82 82">
      <path d="M7 0L82 41L7 81.500Z" fill="#fafafc"/>
      <circle cx="32" cy="40.500" r="32" fill="#fafafc"/>
      <g fill="none" stroke="#0e2d57">
        <circle cx="35" cy="39.500" r="27.500" stroke-width="3"/>
        <path d="M10 24Q4 41 10 58" stroke-width="2"/>
        <path d="M13 17C8 42 22 55 42 55C52 55 58 52 61 49" stroke-width="4"/>
        <path d="M26 15C22 32 32 41 44 40C52 39 56 34 55 27" stroke-width="4"/>
        <path d="M8 56C14 42 28 30 52 21M29 13C44 22 54 34 56 50" stroke-width="4"/>
        <path d="M22 9Q46 13 64 35M26 69Q46 66 62 49" stroke-width="2.600"/>
      </g>
    </svg>
  </section>
</main>
</body>
</html>
```

FILE: styles.css
```css
* { box-sizing: border-box; }
body, h1, h2, dl, dd, ul { margin: 0; padding: 0; }
ul { list-style: none; }
svg { display: block; flex: none; }
.defs { position: absolute; }
body { width: 2338px; height: 1304px; overflow: hidden; font-family: "Open Sans", sans-serif; }

.slide { display: flex; width: 2338px; height: 1304px; }
.half { position: relative; height: 1304px; }
.before { width: 1180px; background: #d1d0d6; }
.after { width: 1158px; background: #0e2d57; }

.head h1 { font-size: 78.2px; line-height: 90px; font-weight: 800; color: #0e2d57; white-space: nowrap; }
.head h2 { font-size: 58.5px; line-height: 72px; font-weight: 400; letter-spacing: -.4px; color: #245f9c; }
.rule { width: 166px; height: 15px; margin-top: 16px; background: #f6be41; }
.before .head { padding: 103px 0 0 139px; height: 349px; }
.after .head { padding: 193px 0 0 146px; height: 348px; }
.after .head h2 { color: #fff; }

/* Old application */
.card { width: 1104px; height: 830px; margin-left: 36px; padding: 14px 20px 0 23px; background: #f7f7f8; }
.app { display: flex; width: 1061px; height: 797px; font: 16.4px/18.7px "Liberation Sans", Arial, sans-serif; color: #3b3f4b; overflow: hidden; }
.panel { width: 347px; background: #fff; display: flex; flex-direction: column; }
.bar { display: flex; align-items: center; height: 42px; flex: none; }
.ico { width: 32px; height: 32px; }
.burger { width: 46px; height: 100%; background: #1f5a9c; display: flex; flex-direction: column; align-items: center; justify-content: center; gap: 4px; }
.burger i { width: 25px; height: 4px; border-radius: 2px; background: #fff; }
.bar .car { margin-left: 41px; }
.bar .pen { margin-left: auto; margin-right: 21px; }
.bar .redo { margin-left: 11px; }
.bar .heart { margin-left: 22px; }
.tools { display: flex; align-items: center; justify-content: space-between; width: 91px; height: 100%; margin-left: auto; padding: 0 9px 0 10px; background: #1f5a9c; }
.sect { flex: none; height: 39px; margin-bottom: 2.5px; padding: 0 8px; line-height: 37px; font-weight: bold; color: #fff; background: #1f5a9c; }
.sect.light { background: #398fd9; }
.sect.up { height: 38px; line-height: 36px; }
.facts > div { display: flex; justify-content: space-between; padding: 6.2px 7.5px 6.2px 8px; min-height: 31.1px; }
.facts dt { color: #50545f; }
.facts dd { font-weight: bold; text-align: right; }
.plans { background: #e9eaee; flex: none; margin-top: -1px; }
.plans li { height: 53px; padding-left: 8px; line-height: 52px; font-weight: bold; border-bottom: 2px solid #fff; }
.plans .sel { background: #f5bb41; height: 51px; line-height: 50px; border: 0; color: #3b3c3e; }
.second { margin-top: 1.5px; }
.edit-old { width: 63px; height: 36px; margin: 0 0 0 142px; padding: 0; flex: none; border: 0; background: #2465a6; color: #e8f4fb; font: 600 14.5px/36px "Open Sans", sans-serif; }
.more { height: 41px; margin: 8px 0 7px; padding-left: 8px; flex: none; background: #f5bb41; color: #3b3c2e; font-weight: bold; line-height: 40px; }
.tail { margin-top: 0; }
.mapcol { width: 367px; display: flex; flex-direction: column; }
.mapbar { height: 42px; flex: none; background: #1f5a9c; }
.mapcol .map { width: 367px; height: 755px; }
.notes { position: absolute; left: 0; top: 0; }

/* Map drawing */
.roads path { fill: none; stroke-linejoin: round; stroke-linecap: round; }
.rd { stroke: #e8b556; stroke-width: 10; }
.town { stroke: #edb343; stroke-width: 7; }
.stream { stroke: #8cc4d8; stroke-width: 4; }
.mainC { stroke: #c5692f; stroke-width: 19; }
.main { stroke: #e97b3d; stroke-width: 12; }
.hwC { stroke: #cf8a30; stroke-width: 17; }
.hw { stroke: #f6c24f; stroke-width: 11; }
.greenC { stroke: #7cc37b; stroke-width: 20; }
.green { stroke: #d9f0cf; stroke-width: 4; }
.rail { stroke: #1c1c1c; stroke-width: 8; }
.lbl text { font-family: Roboto, sans-serif; font-size: 41px; fill: #2b2b2b; stroke: #fff; stroke-width: 7px; stroke-opacity: .85; paint-order: stroke; stroke-linejoin: round; }
.lbl .w { font-style: italic; font-weight: 500; fill: #2c4385; font-size: 41px; }
.lbl .b { font-weight: 700; font-size: 60px; fill: #111; }
.lbl .b.s { font-size: 44px; }
.lbl .num { font-family: "DejaVu Sans", sans-serif; font-weight: 700; font-size: 36px; fill: #111; stroke: none; }
.lbl .num.wt { fill: #fff; font-size: 40px; }
.shieldY { fill: #f3c93f; stroke: #6d6540; stroke-width: 4; }
.shieldW { fill: #fff; stroke: #6a6a6a; stroke-width: 4; }
.shieldR { fill: #c84046; }
.core, .dots { stroke: #eb3624; stroke-linecap: round; stroke-linejoin: round; }
.core { stroke-width: 42; }
.dots { stroke-width: 52; stroke-dasharray: 0 40; }
.solid { fill: #eb3624; }
.line { fill: none; }
.gap { fill: #e9e9e7; }
.rings circle, .ring1 { fill: none; stroke: #1f4a80; }
.rings { stroke-width: 7; }
.ring1 { stroke-width: 7; }
.rings .done { fill: #5b9440; stroke: #5b9440; }
.rings .halo { stroke: #f5bd43; stroke-width: 22px; }
.rings .picked { fill: #b9d7e6; }

/* New application */
.appnew { display: flex; width: 1095px; height: 821px; margin-left: 18px; overflow: hidden; color: #363545; font-size: 15px; }
.side { display: flex; flex-direction: column; background: #fff; }
.left { width: 359px; }
.right { width: 358px; }
.mid { width: 378px; }
.mid .map { width: 378px; height: 778px; }
.after .mapbar { height: 43px; background: #265f9b; }
.nbar { display: flex; align-items: center; height: 43px; flex: none; }
.nbar .burger { width: 54px; padding-left: 7px; gap: 4.5px; background: #265f9b; }
.nbar .burger i { width: 27px; height: 3px; border-radius: 0; }
.nbar .car { margin-left: 24px; }
.nbar .rings-i { margin-left: auto; margin-right: 24px; }
.left .nbar { padding-right: 22px; }
.nbar .redo { margin-left: 12px; }
.nbar .downl { margin-left: 23px; }
.nbar .close { margin-left: auto; margin-right: 17px; }
.find, .grid9 { display: flex; align-items: center; justify-content: center; height: 100%; background: #265f9b; }
.find { width: 49px; border-right: 1px solid #386da6; padding-right: 4px; }
.grid9 { width: 53px; padding-right: 7px; }
.crumb { display: flex; align-items: center; height: 43px; flex: none; font-size: 17px; border-bottom: 1px solid #dedee2; }
.left .crumb .tri { margin: 0 19px 0 27px; }
.crumb .ok { margin: 0 11px 0 19.5px; }
.right .tri { margin-left: auto; margin-right: 22px; }
.tri { fill: #2a2a3a; }
.tab { display: flex; align-items: center; height: 42.5px; flex: none; border-bottom: 2px solid #265f9b; color: #265f9b; font-weight: 700; font-size: 16.5px; padding-left: 17.5px; }
.drop { display: flex; align-items: center; justify-content: center; align-self: stretch; width: 60px; margin-left: auto; background: #265f9b; }
.drop svg { fill: #fff; }
.scroll { display: flex; flex: 1; min-height: 0; overflow: hidden; }
.rows { flex: 1; }
.track { width: 9px; background: #f8f8fa; }
.thumb { width: 8px; margin-left: 1px; background: #cfced6; border-radius: 0 0 4px 4px; height: 217px; }
.right .thumb { margin-top: 79px; height: 308px; border-radius: 4px; }
.acc { display: flex; align-items: center; justify-content: space-between; height: 46.5px; padding: 8px 19px 0 11.5px; background: #d6dfea; color: #265f9b; font-weight: 700; font-size: 16px; }
.acc svg { fill: #265f9b; margin-top: -9px; }
.row { display: flex; align-items: center; height: 42.85px; padding-left: 18px; border-bottom: 1.5px solid #d9d9dd; line-height: 22px; }
.row b { width: 174px; flex: none; font-weight: 700; }
.row span { color: #4c4b59; white-space: nowrap; }
.row.first { height: 46.6px; padding-top: 4px; }
.row.two { height: 54px; }
.row.last { border: 0; }
.right .row { padding-left: 17px; }
.cut { display: flex; align-items: center; height: 28px; border-bottom: 1px solid #e6e6ec; overflow: hidden; font-weight: 700; font-size: 17px; line-height: 20px; }
.cut svg { margin: -30px 7.5px 0 16.5px; }
.cut span { margin-top: -7px; }
.cut i { width: 4px; height: 2px; margin: -24px 0 0 34px; background: #777; }
.task { display: flex; align-items: center; height: 43px; border-bottom: 1px solid #e6e6ec; font-weight: 700; font-size: 17px; padding: 0 24px 0 26px; }
.task span { flex: 1; }
.task svg + svg { margin-left: 21px; }
.edit-new { display: block; width: 64px; height: 32px; margin: 34px 0 0 142px; padding: 0; border: 0; border-radius: 2px; background: #265f9b; color: #fff; font: 600 15px/32px "Open Sans", sans-serif; }
.logo { position: absolute; left: 1019px; top: 1187px; }
```
